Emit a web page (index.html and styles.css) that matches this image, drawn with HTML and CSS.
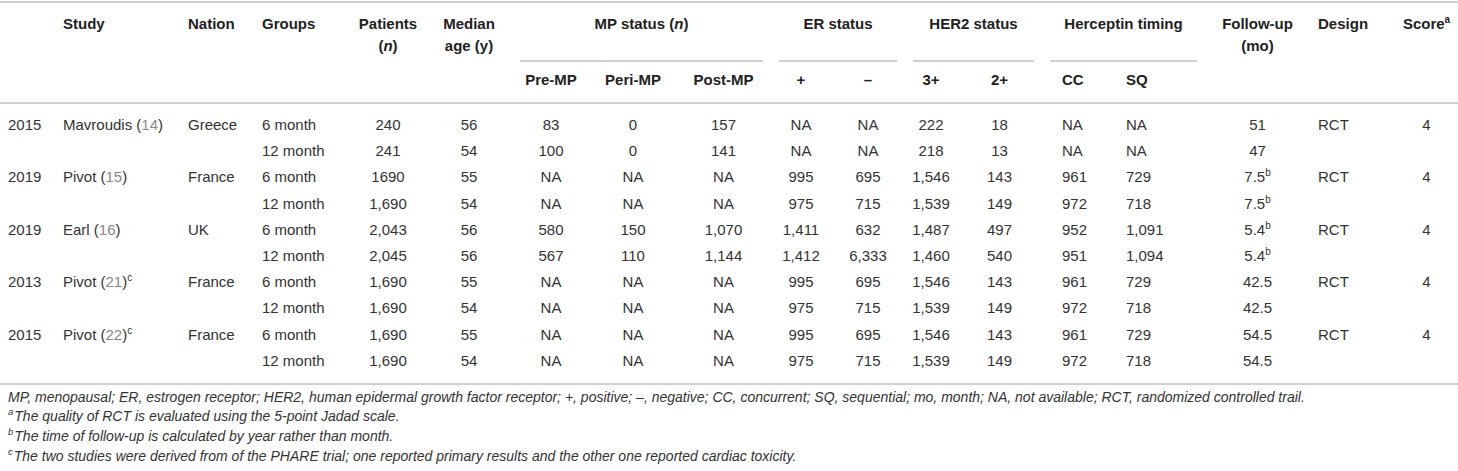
FILE: index.html
```html
<!DOCTYPE html>
<html>
<head>
<meta charset="utf-8">
<link rel="stylesheet" href="styles.css">
</head>
<body>
<div class="wrap">
<table class="tbl">
<colgroup>
<col style="width:55px"><col style="width:125px"><col style="width:74px"><col style="width:96px">
<col style="width:76px"><col style="width:86px"><col style="width:78px"><col style="width:86px">
<col style="width:95px"><col style="width:60px"><col style="width:74px"><col style="width:52px">
<col style="width:85px"><col style="width:76px"><col style="width:87px"><col style="width:105px">
<col style="width:85px"><col style="width:63px">
</colgroup>
<thead>
<tr class="h1">
<th rowspan="2"></th>
<th rowspan="2" class="l">Study</th>
<th rowspan="2" class="l">Nation</th>
<th rowspan="2" class="l">Groups</th>
<th rowspan="2" class="c">Patients<br>(<i>n</i>)</th>
<th rowspan="2" class="c">Median<br>age (y)</th>
<th colspan="3" class="grp"><div class="gl">MP status (<i>n</i>)</div></th>
<th colspan="2" class="grp"><div class="gl">ER status</div></th>
<th colspan="2" class="grp"><div class="gl">HER2 status</div></th>
<th colspan="2" class="grp"><div class="gl">Herceptin timing</div></th>
<th rowspan="2" class="c">Follow-up<br>(mo)</th>
<th rowspan="2" class="l">Design</th>
<th rowspan="2" class="c">Score<sup>a</sup></th>
</tr>
<tr class="h2">
<th class="c">Pre-MP</th>
<th class="c">Peri-MP</th>
<th class="c">Post-MP</th>
<th class="c">+</th>
<th class="c">–</th>
<th class="c">3+</th>
<th class="c">2+</th>
<th class="l cc">CC</th>
<th class="l">SQ</th>
</tr>
</thead>
<tbody>
<tr class="first">
<td>2015</td><td>Mavroudis (<span class="ref">14</span>)</td><td>Greece</td><td>6 month</td>
<td class="c">240</td><td class="c">56</td><td class="c">83</td><td class="c">0</td><td class="c">157</td>
<td class="c">NA</td><td class="c">NA</td><td class="c">222</td><td class="c">18</td>
<td class="cc">NA</td><td>NA</td><td class="c">51</td><td>RCT</td><td class="c">4</td>
</tr>
<tr>
<td></td><td></td><td></td><td>12 month</td>
<td class="c">241</td><td class="c">54</td><td class="c">100</td><td class="c">0</td><td class="c">141</td>
<td class="c">NA</td><td class="c">NA</td><td class="c">218</td><td class="c">13</td>
<td class="cc">NA</td><td>NA</td><td class="c">47</td><td></td><td></td>
</tr>
<tr>
<td>2019</td><td>Pivot (<span class="ref">15</span>)</td><td>France</td><td>6 month</td>
<td class="c">1690</td><td class="c">55</td><td class="c">NA</td><td class="c">NA</td><td class="c">NA</td>
<td class="c">995</td><td class="c">695</td><td class="c">1,546</td><td class="c">143</td>
<td class="cc">961</td><td>729</td><td class="c">7.5<sup>b</sup></td><td>RCT</td><td class="c">4</td>
</tr>
<tr>
<td></td><td></td><td></td><td>12 month</td>
<td class="c">1,690</td><td class="c">54</td><td class="c">NA</td><td class="c">NA</td><td class="c">NA</td>
<td class="c">975</td><td class="c">715</td><td class="c">1,539</td><td class="c">149</td>
<td class="cc">972</td><td>718</td><td class="c">7.5<sup>b</sup></td><td></td><td></td>
</tr>
<tr>
<td>2019</td><td>Earl (<span class="ref">16</span>)</td><td>UK</td><td>6 month</td>
<td class="c">2,043</td><td class="c">56</td><td class="c">580</td><td class="c">150</td><td class="c">1,070</td>
<td class="c">1,411</td><td class="c">632</td><td class="c">1,487</td><td class="c">497</td>
<td class="cc">952</td><td>1,091</td><td class="c">5.4<sup>b</sup></td><td>RCT</td><td class="c">4</td>
</tr>
<tr>
<td></td><td></td><td></td><td>12 month</td>
<td class="c">2,045</td><td class="c">56</td><td class="c">567</td><td class="c">110</td><td class="c">1,144</td>
<td class="c">1,412</td><td class="c">6,333</td><td class="c">1,460</td><td class="c">540</td>
<td class="cc">951</td><td>1,094</td><td class="c">5.4<sup>b</sup></td><td></td><td></td>
</tr>
<tr>
<td>2013</td><td>Pivot (<span class="ref">21</span>)<sup>c</sup></td><td>France</td><td>6 month</td>
<td class="c">1,690</td><td class="c">55</td><td class="c">NA</td><td class="c">NA</td><td class="c">NA</td>
<td class="c">995</td><td class="c">695</td><td class="c">1,546</td><td class="c">143</td>
<td class="cc">961</td><td>729</td><td class="c">42.5</td><td>RCT</td><td class="c">4</td>
</tr>
<tr>
<td></td><td></td><td></td><td>12 month</td>
<td class="c">1,690</td><td class="c">54</td><td class="c">NA</td><td class="c">NA</td><td class="c">NA</td>
<td class="c">975</td><td class="c">715</td><td class="c">1,539</td><td class="c">149</td>
<td class="cc">972</td><td>718</td><td class="c">42.5</td><td></td><td></td>
</tr>
<tr>
<td>2015</td><td>Pivot (<span class="ref">22</span>)<sup>c</sup></td><td>France</td><td>6 month</td>
<td class="c">1,690</td><td class="c">55</td><td class="c">NA</td><td class="c">NA</td><td class="c">NA</td>
<td class="c">995</td><td class="c">695</td><td class="c">1,546</td><td class="c">143</td>
<td class="cc">961</td><td>729</td><td class="c">54.5</td><td>RCT</td><td class="c">4</td>
</tr>
<tr class="last">
<td></td><td></td><td></td><td>12 month</td>
<td class="c">1,690</td><td class="c">54</td><td class="c">NA</td><td class="c">NA</td><td class="c">NA</td>
<td class="c">975</td><td class="c">715</td><td class="c">1,539</td><td class="c">149</td>
<td class="cc">972</td><td>718</td><td class="c">54.5</td><td></td><td></td>
</tr>
</tbody>
</table>
<div class="notes">
<p><i>MP, menopausal; ER, estrogen receptor; HER2, human epidermal growth factor receptor; +, positive; –, negative; CC, concurrent; SQ, sequential; mo, month; NA, not available; RCT, randomized controlled trail.</i></p>
<p><sup>a</sup><i>The quality of RCT is evaluated using the 5-point Jadad scale.</i></p>
<p><sup>b</sup><i>The time of follow-up is calculated by year rather than month.</i></p>
<p><sup>c</sup><i>The two studies were derived from of the PHARE trial; one reported primary results and the other one reported cardiac toxicity.</i></p>
</div>
</div>
</body>
</html>
```

FILE: styles.css
```css
html, body {
  margin: 0;
  padding: 0;
  background: #fff;
}
body {
  font-family: "Liberation Sans", Arial, sans-serif;
  color: #333;
}
.wrap {
  width: 1458px;
  padding-top: 1px;
}
.tbl {
  width: 1458px;
  table-layout: fixed;
  border-collapse: collapse;
  font-size: 15px;
  border-top: 2px solid #d0d0d0;
  border-bottom: 2px solid #d0d0d0;
}
.tbl th, .tbl td {
  padding: 0 0 0 8px;
  white-space: nowrap;
  text-align: left;
}
.tbl th {
  font-weight: bold;
  color: #222;
  vertical-align: top;
  line-height: 22px;
}
.tbl th.c, .tbl td.c {
  text-align: center;
  padding: 0 4px;
}
.tbl .cc {
  padding-left: 20px;
}
.tbl tr.h1 th {
  padding-top: 10px;
}
.tbl tr.h1 th.grp {
  padding: 10px 0 0 0;
  text-align: center;
  height: 48px;
}
.tbl tr.h1 th[rowspan] {
  border-bottom: 2px solid #d0d0d0;
}
.gl {
  margin: 0 8px;
  height: 47px;
  border-bottom: 2px solid #d0d0d0;
}
.tbl tr.h2 th {
  height: 36px;
  padding-bottom: 4px;
  vertical-align: middle;
  border-bottom: 2px solid #d0d0d0;
}
.tbl td {
  height: 26.2px;
  line-height: 18px;
  vertical-align: middle;
}
.tbl tr.first td {
  padding-top: 8px;
}
.tbl tr.last td {
  padding-bottom: 9px;
}
.ref {
  color: #888;
}
sup {
  font-size: 10px;
  line-height: 0;
  vertical-align: 6px;
}
.notes {
  padding: 3px 0 0 8px;
  font-size: 14px;
  color: #333;
}
.notes p {
  margin: 0;
  line-height: 19.6px;
}
.notes sup {
  font-style: italic;
  font-size: 9.5px;
  margin-right: 1px;
}
```
